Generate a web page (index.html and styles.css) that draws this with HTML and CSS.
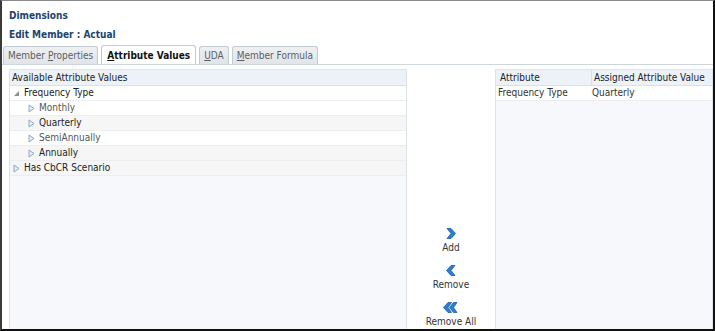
FILE: index.html
```html
<!DOCTYPE html>
<html lang="en">
<head>
    <meta charset="UTF-8">
    <title>Edit Member</title>
    <link rel="stylesheet" href="styles.css">
</head>
<body>
<div class="frame">
    <div class="heading">Dimensions</div>
    <div class="heading sub">Edit Member : Actual</div>

    <div class="tabs">
        <div class="tab">Member <u>P</u>roperties</div>
        <div class="tab active"><u>A</u>ttribute Values</div>
        <div class="tab"><u>U</u>DA</div>
        <div class="tab"><u>M</u>ember Formula</div>
    </div>

    <div class="tab-body">
        <div class="panel left">
            <div class="grid-head">Available Attribute Values</div>
            <div class="row lvl0">
                <svg class="arrow" width="7" height="7" viewBox="0 0 7 7"><path d="M6 1 L6 6 L1 6 Z" fill="#8b9099"/></svg>
                Frequency Type
            </div>
            <div class="row lvl1">
                <svg class="arrow" width="7" height="9" viewBox="0 0 7 9"><path d="M1 1 L6 4.5 L1 8 Z" fill="#e8eef7" stroke="#8fa8c8"/></svg>
                <span class="dim">Monthly</span>
            </div>
            <div class="row lvl1 alt">
                <svg class="arrow" width="7" height="9" viewBox="0 0 7 9"><path d="M1 1 L6 4.5 L1 8 Z" fill="#e8eef7" stroke="#8fa8c8"/></svg>
                Quarterly
            </div>
            <div class="row lvl1">
                <svg class="arrow" width="7" height="9" viewBox="0 0 7 9"><path d="M1 1 L6 4.5 L1 8 Z" fill="#e8eef7" stroke="#8fa8c8"/></svg>
                <span class="dim">SemiAnnually</span>
            </div>
            <div class="row lvl1 alt">
                <svg class="arrow" width="7" height="9" viewBox="0 0 7 9"><path d="M1 1 L6 4.5 L1 8 Z" fill="#e8eef7" stroke="#8fa8c8"/></svg>
                Annually
            </div>
            <div class="row lvl0 alt">
                <svg class="arrow" width="7" height="9" viewBox="0 0 7 9"><path d="M1 1 L6 4.5 L1 8 Z" fill="#e8eef7" stroke="#8fa8c8"/></svg>
                Has CbCR Scenario
            </div>
        </div>

        <div class="actions">
            <div class="action">
                <svg width="10" height="11" viewBox="0 0 10 11"><path d="M1 0.5 L5 0.5 L9.5 5.5 L5 10.5 L1 10.5 L5 5.5 Z" fill="#2f7fd0" stroke="#1d5ea8" stroke-width="0.8"/></svg>
                <span>Add</span>
            </div>
            <div class="action">
                <svg width="10" height="11" viewBox="0 0 10 11"><path d="M9 0.5 L5 0.5 L0.5 5.5 L5 10.5 L9 10.5 L5 5.5 Z" fill="#2f7fd0" stroke="#1d5ea8" stroke-width="0.8"/></svg>
                <span>Remove</span>
            </div>
            <div class="action">
                <svg width="15" height="11" viewBox="0 0 15 11"><path d="M14 0.5 L10.5 0.5 L6.5 5.5 L10.5 10.5 L14 10.5 L10.5 5.5 Z M8.5 0.5 L5 0.5 L0.5 5.5 L5 10.5 L8.5 10.5 L5 5.5 Z" fill="#2f7fd0" stroke="#1d5ea8" stroke-width="0.8"/></svg>
                <span>Remove All</span>
            </div>
        </div>

        <div class="panel right">
            <div class="grid-head cols">
                <div class="c1">Attribute</div>
                <div class="c2">Assigned Attribute Value</div>
            </div>
            <div class="cols value-row">
                <div class="c1">Frequency Type</div>
                <div class="c2">Quarterly</div>
            </div>
        </div>
    </div>
</div>
</body>
</html>
```

FILE: styles.css
```css
html, body {
    margin: 0;
    padding: 0;
    background: #fff;
}
body {
    font-family: "DejaVu Sans Condensed", "DejaVu Sans", sans-serif;
    font-size: 10px;
    color: #333;
}
.frame {
    width: 715px;
    height: 331px;
    box-sizing: border-box;
    border-top: 1px solid #8a8a8a;
    border-left: 2px solid #3a3a3a;
    border-right: 2px solid #111;
    border-bottom: 2px solid #111;
    display: flex;
    flex-direction: column;
    overflow: hidden;
}
.heading {
    font-weight: bold;
    color: #1d436e;
    font-size: 10px;
    padding-left: 7px;
    margin-top: 8px;
    height: 13px;
    line-height: 13px;
}
.heading.sub {
    margin-top: 6px;
}
.tabs {
    display: flex;
    gap: 3px;
    margin-top: 4px;
    padding-left: 1px;
    height: 19px;
    align-items: flex-end;
}
.tab {
    height: 18px;
    box-sizing: border-box;
    padding: 0 4px;
    line-height: 18px;
    border: 1px solid #c3cbd4;
    border-bottom: none;
    border-radius: 3px 3px 0 0;
    background: linear-gradient(#eef0f2, #e1e4e8);
    color: #5a5f66;
    font-size: 10px;
}
.tab.active {
    height: 19px;
    line-height: 19px;
    padding: 0 5px;
    background: #fff;
    color: #111;
    font-weight: bold;
}
.tab u {
    text-decoration-thickness: 1px;
    text-underline-offset: 1px;
}
.tab-body {
    flex: 1;
    display: flex;
    border-top: 1px solid #cfd7e1;
    padding-top: 4px;
    padding-left: 7px;
    min-height: 0;
}
.panel {
    background: #f6f8fc;
    border: 1px solid #dde3eb;
    border-bottom: none;
}
.panel.left {
    width: 396px;
}
.panel.right {
    flex: 1;
}
.grid-head {
    height: 15px;
    line-height: 15px;
    background: #edf2f9;
    border-bottom: 1px solid #d8e0ea;
    padding-left: 2px;
    color: #222;
}
.row {
    height: 14px;
    line-height: 14px;
    background: #fff;
    border-bottom: 1px solid #eceef1;
    display: flex;
    align-items: center;
    color: #222;
}
.row.alt {
    background: #f6f6f6;
}
.row .dim {
    color: #555;
}
.row.lvl0 {
    padding-left: 3px;
}
.row.lvl1 {
    padding-left: 18px;
}
.arrow {
    margin-right: 4px;
    flex: none;
}
.actions {
    width: 88px;
    background: #fff;
    display: flex;
    flex-direction: column;
    justify-content: flex-end;
    align-items: center;
    gap: 11px;
    padding-bottom: 1px;
}
.action {
    display: flex;
    flex-direction: column;
    align-items: center;
    gap: 3px;
    font-size: 10px;
    color: #333;
    line-height: 12px;
}
.cols {
    display: flex;
}
.cols .c1 {
    width: 91px;
    padding-left: 2px;
    border-right: 1px solid #d8e0ea;
}
.cols .c2 {
    flex: 1;
    padding-left: 2px;
    white-space: nowrap;
}
.value-row {
    height: 14px;
    line-height: 14px;
    background: #fff;
    border-bottom: 1px solid #eceef1;
}
.value-row .c1 {
    border-right: none;
    width: 92px;
}
```
